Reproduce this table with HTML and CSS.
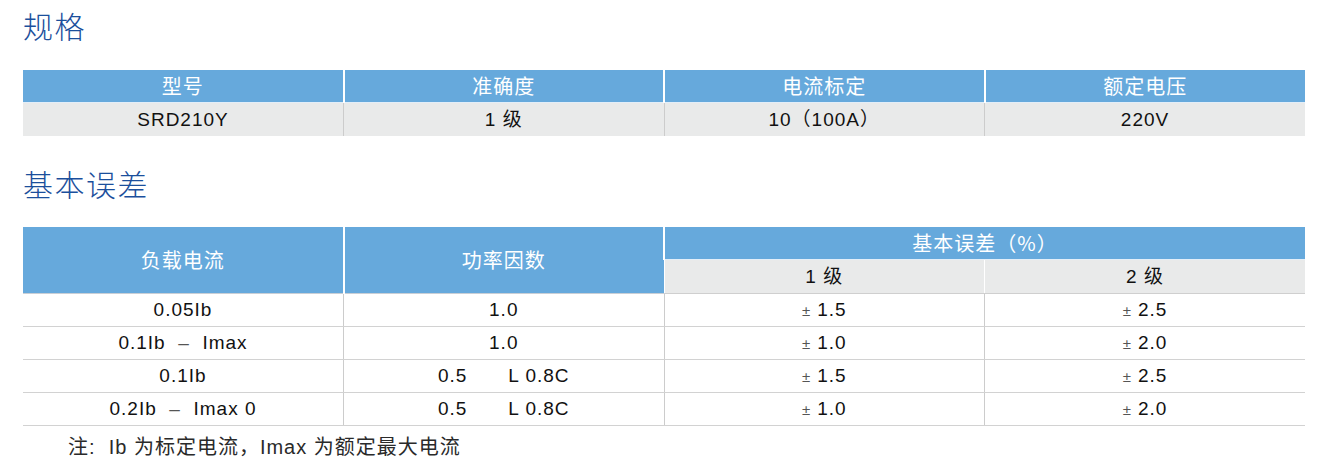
FILE: index.html
```html
<!DOCTYPE html>
<html lang="zh-CN">
<head>
<meta charset="utf-8">
<title>规格</title>
<link rel="stylesheet" href="styles.css">
</head>
<body>
<div class="page">
  <h2 class="title">规格</h2>
  <table class="spec">
    <colgroup><col class="c"><col class="c"><col class="c"><col class="c"></colgroup>
    <thead>
      <tr><th>型号</th><th>准确度</th><th>电流标定</th><th>额定电压</th></tr>
    </thead>
    <tbody>
      <tr class="gray"><td>SRD210Y</td><td>1 级</td><td>10（100A）</td><td>220V</td></tr>
    </tbody>
  </table>

  <h2 class="title title2">基本误差</h2>
  <table class="spec err">
    <colgroup><col class="c"><col class="c"><col class="c"><col class="c"></colgroup>
    <thead>
      <tr><th rowspan="2" class="tall">负载电流</th><th rowspan="2" class="tall">功率因数</th><th colspan="2">基本误差（%）</th></tr>
      <tr class="sub"><th>1 级</th><th>2 级</th></tr>
    </thead>
    <tbody>
      <tr><td>0.05Ib</td><td>1.0</td><td><span class="pm">±</span>1.5</td><td><span class="pm">±</span>2.5</td></tr>
      <tr><td>0.1Ib&nbsp; <span class="dash">–</span> &nbsp;Imax</td><td>1.0</td><td><span class="pm">±</span>1.0</td><td><span class="pm">±</span>2.0</td></tr>
      <tr><td>0.1Ib</td><td><span class="pf">0.5</span>L 0.8C</td><td><span class="pm">±</span>1.5</td><td><span class="pm">±</span>2.5</td></tr>
      <tr><td>0.2Ib&nbsp; <span class="dash">–</span> &nbsp;Imax 0</td><td><span class="pf">0.5</span>L 0.8C</td><td><span class="pm">±</span>1.0</td><td><span class="pm">±</span>2.0</td></tr>
    </tbody>
  </table>
  <p class="note">注:&nbsp; Ib 为标定电流，Imax 为额定最大电流</p>
</div>
</body>
</html>
```

FILE: styles.css
```css
html, body {
  margin: 0;
  padding: 0;
  background: #ffffff;
}

body {
  font-family: "Liberation Sans", Arial, "Noto Sans CJK SC", sans-serif;
  color: #111111;
}

.page {
  padding: 5px 0 0 23px;
  width: 1282px;
}

.title {
  margin: 0;
  font-family: "Noto Sans CJK SC", "Noto Sans CJK TC", sans-serif;
  font-weight: 300;
  font-size: 30px;
  line-height: 40px;
  color: #1b4f9c;
  letter-spacing: 1.5px;
}

.spec {
  border-collapse: collapse;
  width: 1282px;
  table-layout: fixed;
  margin-top: 25px;
}

.title2 {
  margin-top: 27px;
}

.err {
  margin-top: 24px;
}

.spec th {
  background: #66a9dc;
  color: #ffffff;
  font-family: "Noto Sans CJK SC", sans-serif;
  font-weight: 400;
  font-size: 20px;
  line-height: 24px;
  letter-spacing: 1px;
  height: 32px;
  padding: 0;
  text-align: center;
  vertical-align: middle;
  border-left: 2px solid #ffffff;
  border-bottom: 1px solid #e3eef8;
}

.spec th:first-child {
  border-left: none;
}

.spec .sub th {
  background: #e9eaea;
  color: #111111;
  font-family: "Liberation Sans", "Noto Sans CJK SC", sans-serif;
  font-size: 19px;
  letter-spacing: 1px;
  height: 33px;
  border-left: 1px solid #ffffff;
  border-bottom: 1px solid #cfcfcf;
}

.spec th.tall {
  border-bottom: 1px solid #c9cfd6;
}

.spec td {
  height: 32px;
  padding: 0;
  text-align: center;
  vertical-align: middle;
  font-size: 19px;
  line-height: 24px;
  letter-spacing: 1px;
  border-left: 1px solid #cccccc;
  border-bottom: 1px solid #d2d2d2;
  white-space: nowrap;
}

.spec td:first-child {
  border-left: none;
}

.spec .gray td {
  background: #e9eaea;
  height: 33px;
  border-bottom: none;
}

.pm {
  font-size: 15px;
  color: #555555;
  margin-right: 7px;
  letter-spacing: 0;
}

.dash {
  color: #555555;
}

.pf {
  display: inline-block;
  margin-right: 41px;
}

.note {
  margin: 8px 0 0 45px;
  font-family: "Liberation Sans", "Noto Sans CJK SC", sans-serif;
  font-size: 20px;
  line-height: 26px;
  color: #2a2a2a;
  letter-spacing: 1px;
}
```
